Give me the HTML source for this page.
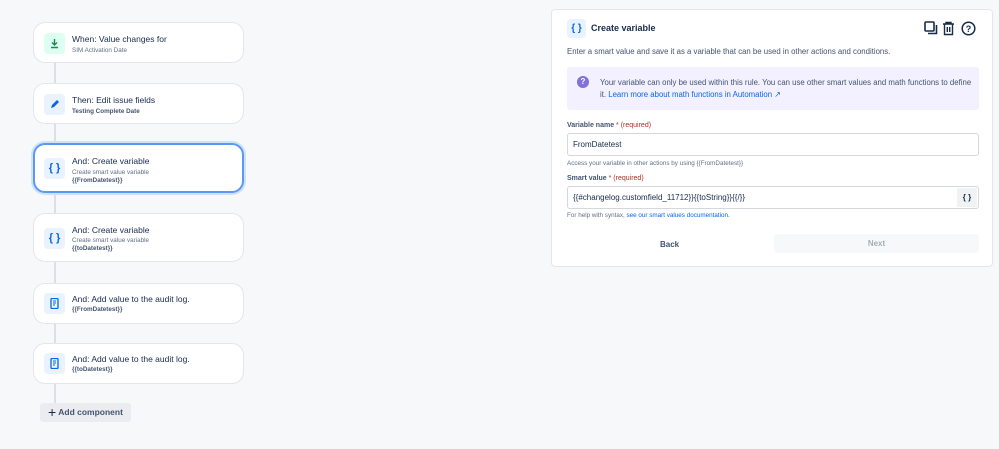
<!DOCTYPE html>
<html><head><style>
*{box-sizing:border-box;margin:0;padding:0}
body{width:999px;height:449px;background:#f7f8f9;font-family:"Liberation Sans",sans-serif;color:#172b4d;position:relative;overflow:hidden}
.line{position:absolute;left:54px;top:60px;width:2px;height:345px;background:#dcdfe4}
.card{position:absolute;left:33px;width:211px;background:#fff;border:1px solid #e4e6ea;border-radius:12px;}
.card.sel{border:2px solid #5a9af5;box-shadow:0 0 0 2px #cfe1fd}
.ic{position:absolute;left:10px;width:21px;height:21px;border-radius:4px;background:#e9f2ff;color:#0c66e4;font-size:11px;font-weight:bold;text-align:center;line-height:21px}
.ic svg{position:absolute;left:5px;top:5px}
.t{position:absolute;left:38px;font-size:8.5px;color:#172b4d}
.s{position:absolute;left:38px;font-size:6.3px;color:#626f86}
.b{font-weight:bold;color:#44546f}
.panel{position:absolute;left:551px;top:9px;width:442px;height:258px;background:#fff;border:1px solid #e4e6ea;border-radius:4px}
.a{position:absolute}
.lbl{font-size:7px;font-weight:bold;color:#44546f}
.lbl span{color:#ae2e24;font-weight:normal}
.inp{position:absolute;left:15px;width:412px;height:23px;border:1px solid #d4d7dc;border-radius:3px;font-size:8px;line-height:21px;padding-left:5px;color:#172b4d}
.help{font-size:6.3px;color:#626f86}
a{color:#0c66e4;text-decoration:none}
</style></head><body>
<div class="line"></div>
<div class="card" style="top:22px;height:41px"><div class="ic" style="top:10px;background:#dcfff1"><svg width="11" height="11" viewBox="0 0 11 11"><path d="M5.5 1v6M3 4.5l2.5 2.5 2.5-2.5M2 9.5h7" stroke="#1f845a" stroke-width="1.4" fill="none"/></svg></div><div class="t" style="top:11px">When: Value changes for</div><div class="s" style="top:24px">SIM Activation Date</div></div>
<div class="card" style="top:83px;height:41px"><div class="ic" style="top:10px"><svg width="11" height="11" viewBox="0 0 11 11"><path d="M2 9l1-3 5-5 2 2-5 5z" fill="#0c66e4"/></svg></div><div class="t" style="top:11px">Then: Edit issue fields</div><div class="s b" style="top:24px">Testing Complete Date</div></div>
<div class="card sel" style="top:143px;height:50px"><div class="ic" style="top:13px;left:9px">{ }</div><div class="t" style="top:11px;left:37px">And: Create variable</div><div class="s" style="top:24px;left:37px">Create smart value variable</div><div class="s b" style="top:32px;left:37px">{{FromDatetest}}</div></div>
<div class="card" style="top:213px;height:49px"><div class="ic" style="top:14px">{ }</div><div class="t" style="top:11px">And: Create variable</div><div class="s" style="top:23px">Create smart value variable</div><div class="s b" style="top:31px">{{toDatetest}}</div></div>
<div class="card" style="top:283px;height:41px"><div class="ic" style="top:9px"><svg width="11" height="11" viewBox="0 0 11 11"><rect x="2" y="0.5" width="7" height="10" rx="1" fill="none" stroke="#0c66e4" stroke-width="1.3"/><path d="M4 3h3M4 5h3M4 7h2" stroke="#0c66e4"/></svg></div><div class="t" style="top:10px">And: Add value to the audit log.</div><div class="s b" style="top:22px">{{FromDatetest}}</div></div>
<div class="card" style="top:343px;height:41px"><div class="ic" style="top:9px"><svg width="11" height="11" viewBox="0 0 11 11"><rect x="2" y="0.5" width="7" height="10" rx="1" fill="none" stroke="#0c66e4" stroke-width="1.3"/><path d="M4 3h3M4 5h3M4 7h2" stroke="#0c66e4"/></svg></div><div class="t" style="top:10px">And: Add value to the audit log.</div><div class="s b" style="top:22px">{{toDatetest}}</div></div>
<div class="a" style="left:40px;top:403px;width:91px;height:19px;background:#ebecf0;border-radius:3px;font-size:8.5px;font-weight:bold;color:#44546f;line-height:19px;padding-left:8px"><span style="font-size:14px;font-weight:normal;color:#172b4d;vertical-align:-2px">+</span> Add component</div>

<div class="panel">
<div class="a" style="left:15px;top:9px;width:19px;height:19px;border-radius:4px;background:#e9f2ff;color:#0c66e4;font-size:10px;font-weight:bold;text-align:center;line-height:19px">{ }</div>
<div class="a" style="left:39px;top:13px;font-size:9px;font-weight:bold">Create variable</div>
<svg class="a" style="left:372px;top:11px" width="56" height="15" viewBox="0 0 56 15"><rect x="1" y="1" width="9" height="9" rx="1" fill="none" stroke="#172b4d" stroke-width="1.6"/><path d="M4 12.5h8.5V4" fill="none" stroke="#172b4d" stroke-width="1.6"/><path d="M19 3h11M22 3V1.5h5V3M20.5 3.5v10h8v-10M23.3 6v5M25.7 6v5" fill="none" stroke="#172b4d" stroke-width="1.4"/><circle cx="44.5" cy="7.5" r="6.3" fill="none" stroke="#172b4d" stroke-width="1.5"/><text x="44.5" y="10.8" font-size="9" font-weight="bold" text-anchor="middle" fill="#172b4d" font-family="Liberation Sans">?</text></svg>
<div class="a" style="left:15px;top:37px;font-size:7.8px;color:#44546f">Enter a smart value and save it as a variable that can be used in other actions and conditions.</div>
<div class="a" style="left:15px;top:57px;width:412px;height:43px;background:#f3f0ff;border-radius:3px">
<div class="a" style="left:10px;top:9px;width:12px;height:12px;border-radius:50%;background:#8270db;color:#fff;font-size:8px;font-weight:bold;text-align:center;line-height:12px">?</div>
<div class="a" style="left:33px;top:10px;font-size:7.8px;color:#44546f;line-height:12px;width:375px">Your variable can only be used within this rule. You can use other smart values and math functions to define it. <a>Learn more about math functions in Automation ↗</a></div></div>
<div class="a lbl" style="left:15px;top:112px">Variable name<span> * (required)</span></div>
<div class="inp" style="top:123px">FromDatetest</div>
<div class="a help" style="left:15px;top:150px">Access your variable in other actions by using {{FromDatetest}}</div>
<div class="a lbl" style="left:15px;top:165px">Smart value<span> * (required)</span></div>
<div class="inp" style="top:176px">{{#changelog.customfield_11712}}{{toString}}{{/}}<div class="a" style="right:1px;top:1px;width:20px;height:19px;background:#f1f2f4;font-size:8px;font-weight:bold;text-align:center;line-height:19px">{ }</div></div>
<div class="a help" style="left:15px;top:202px">For help with syntax, <a>see our smart values documentation.</a></div>
<div class="a" style="left:108px;top:230px;font-size:8px;font-weight:bold;color:#44546f">Back</div>
<div class="a" style="left:222px;top:224px;width:205px;height:19px;background:#f7f8f9;border-radius:3px;font-size:8px;font-weight:bold;color:#a5adba;text-align:center;line-height:19px">Next</div>
</div>
</body></html>
